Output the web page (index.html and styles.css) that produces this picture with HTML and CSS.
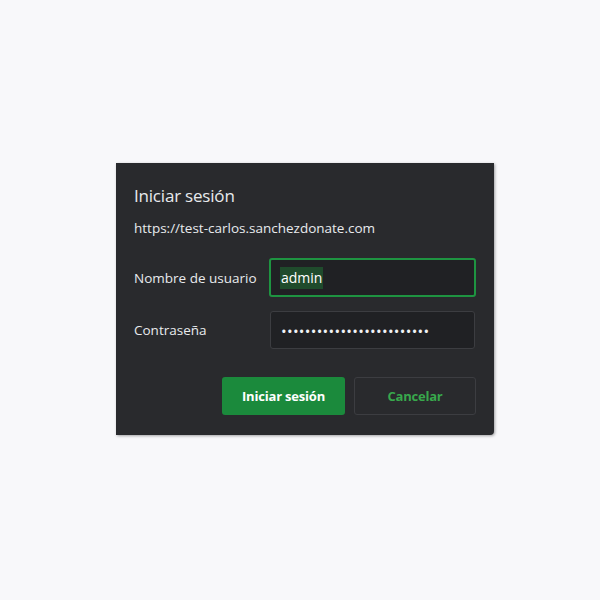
FILE: index.html
```html
<!DOCTYPE html>
<html>
<head>
<meta charset="utf-8">
<link rel="stylesheet" href="styles.css">
</head>
<body>
<div class="dialog">
  <div class="title">Iniciar sesión</div>
  <div class="url">https://test-carlos.sanchezdonate.com</div>
  <div class="form">
    <label class="label">Nombre de usuario</label>
    <div class="input focused"><span class="sel">admin</span></div>
    <label class="label">Contraseña</label>
    <div class="input"><span class="dots">•••••••••••••••••••••••••</span></div>
  </div>
  <div class="actions">
    <button class="btn primary">Iniciar sesión</button>
    <button class="btn secondary">Cancelar</button>
  </div>
</div>
</body>
</html>
```
FILE: styles.css
```css
html, body { margin: 0; padding: 0; }
body {
  width: 600px; height: 600px;
  background: #f8f8fa;
  font-family: "Open Sans", "Noto Sans", sans-serif;
  padding: 163px 0 0 116px;
  box-sizing: border-box;
}
.dialog {
  width: 378px;
  height: 272px;
  box-sizing: border-box;
  background: #292a2d;
  padding: 22px 18px 0 18px;
  color: #e8eaed;
  box-shadow: 1px 1px 3px rgba(0,0,0,0.35);
  border-radius: 0 0 4px 0;
}
.title {
  font-size: 17px;
  line-height: 22px;
  color: #e8eaed;
  letter-spacing: -0.2px;
}
.url {
  margin-top: 12px;
  font-size: 13.5px;
  line-height: 18px;
}
.form {
  margin-top: 21px;
  display: grid;
  grid-template-columns: 135px 207px;
  row-gap: 14px;
  align-items: center;
}
.label {
  font-size: 13.5px;
}
.input {
  height: 38px;
  box-sizing: border-box;
  border: 1px solid #3c3d41;
  border-radius: 3px;
  background: #202124;
  display: flex;
  align-items: center;
  padding-left: 10px;
  font-size: 13.5px;
  margin-left: 1px;
  width: 205px;
}
.input.focused {
  border: 2px solid #1e9441;
  padding-left: 9px;
  height: 39px;
  margin-left: 0;
  width: 207px;
}
.sel {
  background: #1f4b2c;
  color: #fff;
  line-height: 22px;
  padding: 0 1px;
  font-size: 14px;
}
.dots {
  font-size: 15px;
  letter-spacing: 0.3px;
  color: #f0f2f5;
  margin-top: 1px;
}
.actions {
  margin-top: 28px;
  display: flex;
  justify-content: flex-end;
  gap: 9px;
}
.btn {
  height: 38px;
  width: 123px;
  border-radius: 3px;
  font-family: "Open Sans", "Noto Sans", sans-serif;
  font-size: 13px;
  font-weight: 700;
  letter-spacing: -0.2px;
  cursor: pointer;
}
.primary {
  background: #1b8a3c;
  border: none;
  color: #ffffff;
}
.secondary {
  background: #292a2d;
  border: 1px solid #3c3d41;
  color: #38a84c;
  width: 122px;
}
```
